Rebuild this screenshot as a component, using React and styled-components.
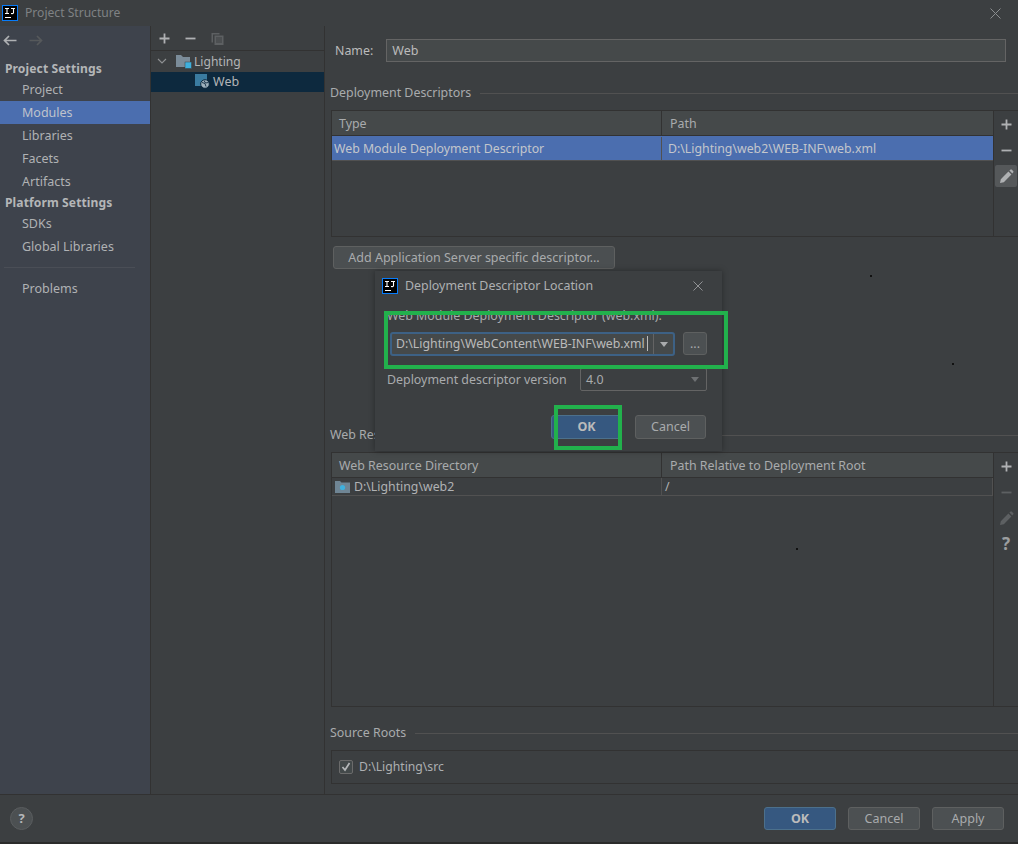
import React from 'react';
import styled, { createGlobalStyle } from 'styled-components';

const Global = createGlobalStyle`
  html, body { margin: 0; padding: 0; background: #3c3f41; }
  * { box-sizing: border-box; }
`;
const Frame = styled.div`
  position: relative; width: 1018px; height: 844px; overflow: hidden;
  display: flex; flex-direction: column; background: #3c3f41; color: #bbbbbb;
  font-family: "Noto Sans", "Open Sans", sans-serif; font-size: 13px; line-height: 18px;
`;
const TitleBar = styled.div`
  height: 26px; flex: none; display: flex; align-items: center; padding: 0 17px 0 2px; gap: 7px; color: #7f8284; font-size: 12.1px;
`;
const TitleText = styled.span`flex: 1;`;
const Body = styled.div`flex: 1; min-height: 0; display: flex;`;
const Sidebar = styled.nav`
  width: 151px; flex: none; background: #3e434c; border-right: 1px solid #323232; display: flex; flex-direction: column;
`;
const NavArrows = styled.div`height: 28px; display: flex; align-items: center; padding: 0 0 0 3px; gap: 12px; margin-bottom: 4px;`;
const GroupTitle = styled.div`height: ${p => p.$h || 20}px; line-height: ${p => p.$lh || 20}px; padding-left: 5px; font-weight: 700; font-size: 12.1px; color: #b4b6b8; letter-spacing: .1px;`;
const NavItem = styled.div`
  height: 23px; line-height: 23px; padding-left: 22px; font-size: 12.5px; color: ${p => p.$active ? '#bfc3cc' : '#b0b2b4'};
  background: ${p => p.$active ? '#4b6eaf' : 'transparent'};
`;
const NavSep = styled.div`height: 1px; background: #4a4e56; margin: 9px 15px 9px 4px;`;
const TreePane = styled.div`width: 174px; flex: none; border-right: 1px solid #323232; display: flex; flex-direction: column;`;
const TreeToolbar = styled.div`height: 25px; border-bottom: 1px solid #323232; display: flex; align-items: center; padding-left: 8px; gap: 15px; flex: none;`;
const TreeRow = styled.div`
  height: 20px; display: flex; align-items: center; padding: 0 0 1px ${p => p.$indent}px; gap: ${p => p.$gap || 3}px;
  background: ${p => p.$selected ? '#0d293e' : 'transparent'}; color: #b3b5b7; font-size: 12.5px; margin-top: ${p => p.$mt || 0}px;
`;
const TreeLabel = styled.span`margin-left: ${p => p.$ml || 0}px; font-size: ${p => p.$fs || 12.5}px;`;
const Content = styled.div`flex: 1; min-width: 0; padding: 13px 0 0 5px; display: flex; flex-direction: column;`;
const NameRow = styled.div`display: flex; align-items: center; padding-left: 5px; gap: 13px; height: 23px; padding-right: 12px; font-size: 12.4px;`;
const NameInput = styled.div`flex: 1; height: 23px; background: #45494a; border: 1px solid #646464; padding-left: 5px; line-height: 21px; color: #bbb; font-size: 12.5px;`;
const Section = styled.div`
  display: flex; align-items: center; gap: 9px; height: 18px; color: #a9abad; font-size: 12.4px; margin-top: ${p => p.$mt}px;
  &::after { content: ''; flex: 1; height: 1px; background: #515151; }
`;
const TableBox = styled.div`
  display: flex; height: ${p => p.$h}px; margin: 8px 0 0 1px; border: 1px solid #323232; border-right: 0;
`;
const TableMain = styled.div`flex: 1; min-width: 0; display: flex; flex-direction: column;`;
const Side = styled.div`width: 25px; flex: none; border-left: 1px solid #323232; display: flex; flex-direction: column; align-items: center; padding-top: 2px;`;
const SideBtn = styled.div`
  width: 22px; height: 22px; margin-bottom: 4px; display: flex; align-items: center; justify-content: center; border-radius: 2px;
  background: ${p => p.$on ? '#55585a' : 'transparent'};
`;
const HelpGlyph = styled.b`color: #9c9ea0; font-size: 17px; line-height: 22px;`;
const Cols = styled.div`display: grid; grid-template-columns: 329px 1fr;`;
const Head = styled(Cols)`height: 25px; background: #45494a; border-bottom: 1px solid #323232;`;
const HeadCell = styled.div`padding-left: 7px; line-height: 25px; font-size: 12.4px; color: #a9abad; & + & { border-left: 1px solid #323232; padding-left: 8px; }`;
const Row = styled(Cols)`
  height: ${p => p.$h}px; background: ${p => p.$selected ? '#4b6eaf' : 'transparent'}; color: ${p => p.$selected ? '#c3c6cc' : '#b0b2b4'};
  border-bottom: 1px solid #515151; padding-top: ${p => p.$selected ? 1 : 0}px; ${p => p.$framed ? 'border-right: 1px solid #515151;' : ''}
`;
const Cell = styled.div`padding-left: ${p => p.$pl || 2}px; display: flex; align-items: center; gap: ${p => p.$gap || 4}px; font-size: 12.3px; white-space: nowrap; & + & { border-left: 1px solid #515151; }`;
const Button = styled.div`
  width: ${p => p.$w}px; height: ${p => p.$h || 23}px; flex: none; border-radius: 3px; text-align: center; line-height: ${p => (p.$h || 23) - 2}px;
  border: 1px solid ${p => p.$primary ? '#4c708c' : '#5e6060'}; background: ${p => p.$primary ? '#365880' : '#4c5052'};
  color: ${p => p.$primary ? '#bbbbbb' : '#a9abad'}; font-weight: ${p => p.$primary ? 700 : 400}; font-size: 12.5px;
`;
const AddDescriptor = styled(Button)`margin: 9px 0 0 3px; background: #4b4f51;`;
const RootsBox = styled.div`margin: 8px 0 0 1px; height: 34px; border: 1px solid #323232; border-right: 0; display: flex; align-items: center; padding-left: 7px; gap: 6px; font-size: 12.2px; color: #adafb1;`;
const Check = styled.div`width: 14px; height: 14px; border: 1px solid #6b6b6b; background: #43494a; border-radius: 2px; display: flex; align-items: center; justify-content: center;`;
const Footer = styled.div`
  height: 50px; flex: none; border-top: 1px solid #323232; border-bottom: 2px solid #2b2b2b; display: flex; align-items: center; padding: 0 14px 0 10px; gap: 12px;
`;
const Help = styled.div`width: 23px; height: 23px; border-radius: 50%; background: #4c5052; border: 1px solid #5a5d5f; text-align: center; line-height: 20px; font-weight: 700; font-size: 13px; color: #b5b7b9; margin-right: auto;`;
const Dialog = styled.div`
  position: absolute; left: 375px; top: 271px; width: 347px; height: 180px; background: #3c3f41; box-shadow: 0 0 6px rgba(0,0,0,.35);
  display: flex; flex-direction: column; padding: 0 15px 0 12px;
`;
const DialogTitle = styled.div`height: 29px; flex: none; display: flex; align-items: center; gap: 7px; margin: 0 0 0 -5px; padding-right: 4px; color: #aeb0b2; font-size: 12.4px;`;
const FieldLabel = styled.div`margin-top: 7px; height: 18px; line-height: 18px; font-size: 12.4px; color: #a9abad; white-space: nowrap;`;
const FieldRow = styled.div`display: flex; gap: 8px; margin: 7px 0 0 3px; height: 24px;`;
const Combo = styled.div`
  flex: 1; border: 2px solid #3d6185; border-radius: 3px; background: #45494a; display: flex; align-items: center; justify-content: space-between;
  font-size: 12.3px; color: #bbb;
`;
const ComboText = styled.span`padding-left: 4px; white-space: nowrap;`;
const ComboArrowCell = styled.div`width: 20px; height: 100%; border-left: 1px solid #646464; display: flex; align-items: center; justify-content: center; flex: none;`;
const Caret = styled.span`display: inline-block; width: 1px; height: 15px; background: #bbb; margin-left: 2px; vertical-align: -3px;`;
const Arrow = styled.span`width: 0; height: 0; border-left: 4px solid transparent; border-right: 4px solid transparent; border-top: 5px solid ${p => p.$dim ? '#6e7173' : '#a9abad'};`;
const VersionRow = styled.div`display: flex; align-items: center; justify-content: space-between; margin-top: 12px; height: 23px; font-size: 12.4px; color: #a9abad;`;
const VersionSelect = styled.div`width: 127px; height: 23px; border: 1px solid #646464; border-radius: 2px; background: #3c3f41; display: flex; align-items: center; justify-content: space-between; padding: 0 7px 0 5px;`;
const DialogActions = styled.div`display: flex; margin-top: 24px; gap: 13px; justify-content: flex-end; padding-right: 1px; align-items: flex-start;`;
const Highlight = styled.div`position: absolute; border: 4px solid #22b14c; pointer-events: none; left: ${p => p.$x}px; top: ${p => p.$y}px; width: ${p => p.$w}px; height: ${p => p.$h}px;`;
const Speck = styled.i`position: absolute; width: 2px; height: 2px; background: #111; left: ${p => p.$x}px; top: ${p => p.$y}px;`;
const CloseBtn = styled.svg`flex: none;`;

const Logo = ({ s = 16 }) => (
  <svg width={s} height={s} viewBox="0 0 16 16" style={{ flex: 'none' }}>
    <rect x=".5" y=".5" width="15" height="15" fill="#000" stroke="#087cfa" />
    <path d="M3 3.500h4M5 3.500v5M3 8.500h4M9 3.500h4M11.500 3.500v4.300c0 .8-1 1-2.500.7M3 12.500h6" stroke="#fff" strokeWidth="1.100" fill="none" />
  </svg>
);
const X = ({ s = 11, c = '#8a8d8f' }) => (
  <CloseBtn width={s} height={s} viewBox="0 0 11 11"><path d="M.5.5l10 10M10.500.5l-10 10" stroke={c} strokeWidth="1" /></CloseBtn>
);
const Plus = ({ c = '#afb1b3' }) => <svg width="11" height="11" viewBox="0 0 11 11"><path d="M5.500.5v10M.5 5.500h10" stroke={c} strokeWidth="1.800" /></svg>;
const Minus = ({ c = '#afb1b3' }) => <svg width="11" height="11" viewBox="0 0 11 11"><path d="M.5 5.500h10" stroke={c} strokeWidth="1.800" /></svg>;
const Pencil = ({ c = '#afb1b3' }) => <svg width="15" height="15" viewBox="0 0 15 15"><path d="M1 14l.8-3.800 7.600-7.600 3 3-7.600 7.600zM10.400 1.600l1.200-1c.4-.3.8-.3 1.100 0l1.600 1.600c.3.3.3.7 0 1.100l-1 1.200z" fill={c} /></svg>;
const Copy = () => <svg width="13" height="13" viewBox="0 0 13 13"><path d="M.5 1h8v1.500h-6.500v8H.5z" fill="#5d6062"/><rect x="3.500" y="3.500" width="9" height="9.500" fill="#5d6062"/><path d="M5 6h6M5 8h6M5 10h6" stroke="#3c3f41"/></svg>;
const Back = () => <svg width="14" height="11" viewBox="0 0 14 11"><path d="M13.500 5.500H2M6 1L1.500 5.500 6 10" stroke="#afb1b3" strokeWidth="1.700" fill="none"/></svg>;
const Forward = () => <svg width="14" height="11" viewBox="0 0 14 11"><path d="M.5 5.500H12M8 1l4.500 4.500L8 10" stroke="#56595b" strokeWidth="1.700" fill="none"/></svg>;
const FolderModule = () => <svg width="16" height="15" viewBox="0 0 16 15"><path d="M0 1h5l2 2h7v10H0z" fill="#7b8c99"/><rect x="9" y="8" width="6.500" height="6.500" fill="#3fb0dd" stroke="#3c3f41" strokeWidth=".5"/></svg>;
const WebModule = () => <svg width="15" height="15" viewBox="0 0 15 15"><rect x="0" y="0" width="12" height="12" fill="#3a7ba0"/><circle cx="10" cy="10" r="4.300" fill="#9fb1bd" stroke="#0d293e"/><path d="M7 8.500l3 1 1 3M9 6.500l1.500 2.500 3-.5" stroke="#0d293e" strokeWidth=".9" fill="none"/></svg>;
const WebFolder = () => <svg width="15" height="12" viewBox="0 0 15 12"><path d="M0 0h5l1.500 1.500H15V12H0z" fill="#6f8594"/><circle cx="7.500" cy="6.500" r="2.600" fill="#3fb0dd"/></svg>;
const Chevron = () => <svg width="10" height="7" viewBox="0 0 10 7"><path d="M1 1l4 4 4-4" stroke="#8f9193" strokeWidth="1.100" fill="none"/></svg>;
const Tick = () => <svg width="10" height="10" viewBox="0 0 10 10"><path d="M1.500 5l2.500 3 4.500-7" stroke="#b5b7b9" strokeWidth="1.700" fill="none"/></svg>;

export default function App() {
  return (
    <Frame>
      <Global />
      <TitleBar>
        <Logo />
        <TitleText>Project Structure</TitleText>
        <X />
      </TitleBar>
      <Body>
        <Sidebar>
          <NavArrows><Back /><Forward /></NavArrows>
          <GroupTitle $lh={22}>Project Settings</GroupTitle>
          <NavItem>Project</NavItem>
          <NavItem $active>Modules</NavItem>
          <NavItem>Libraries</NavItem>
          <NavItem>Facets</NavItem>
          <NavItem>Artifacts</NavItem>
          <GroupTitle $h={19}>Platform Settings</GroupTitle>
          <NavItem>SDKs</NavItem>
          <NavItem>Global Libraries</NavItem>
          <NavSep />
          <NavItem>Problems</NavItem>
        </Sidebar>
        <TreePane>
          <TreeToolbar><Plus /><Minus /><Copy /></TreeToolbar>
          <TreeRow $indent={6} $gap={9} $mt={1}><Chevron /><FolderModule /><TreeLabel $ml={-7} $fs={12.1}>Lighting</TreeLabel></TreeRow>
          <TreeRow $indent={44} $selected><WebModule /><TreeLabel>Web</TreeLabel></TreeRow>
        </TreePane>
        <Content>
          <NameRow>Name:<NameInput>Web</NameInput></NameRow>
          <Section $mt={22}>Deployment Descriptors</Section>
          <TableBox $h={127}>
            <TableMain>
              <Head><HeadCell>Type</HeadCell><HeadCell>Path</HeadCell></Head>
              <Row $h={25} $selected>
                <Cell>Web Module Deployment Descriptor</Cell>
                <Cell $pl={6}>D:\Lighting\web2\WEB-INF\web.xml</Cell>
              </Row>
            </TableMain>
            <Side>
              <SideBtn><Plus /></SideBtn>
              <SideBtn><Minus /></SideBtn>
              <SideBtn $on><Pencil /></SideBtn>
            </Side>
          </TableBox>
          <AddDescriptor $w={282}>Add Application Server specific descriptor...</AddDescriptor>
          <Section $mt={157}>Web Resource Directories</Section>
          <TableBox $h={255}>
            <TableMain>
              <Head><HeadCell>Web Resource Directory</HeadCell><HeadCell>Path Relative to Deployment Root</HeadCell></Head>
              <Row $h={18} $framed>
                <Cell $pl={3} $gap={4}><WebFolder />D:\Lighting\web2</Cell>
                <Cell $pl={3}>/</Cell>
              </Row>
            </TableMain>
            <Side>
              <SideBtn><Plus /></SideBtn>
              <SideBtn><Minus c="#5d6062" /></SideBtn>
              <SideBtn><Pencil c="#5d6062" /></SideBtn>
              <SideBtn><HelpGlyph>?</HelpGlyph></SideBtn>
            </Side>
          </TableBox>
          <Section $mt={17}>Source Roots</Section>
          <RootsBox><Check><Tick /></Check>D:\Lighting\src</RootsBox>
        </Content>
      </Body>
      <Footer>
        <Help>?</Help>
        <Button $primary $w={72}>OK</Button>
        <Button $w={72}>Cancel</Button>
        <Button $w={72}>Apply</Button>
      </Footer>

      <Dialog>
        <DialogTitle><Logo /><TitleText>Deployment Descriptor Location</TitleText><X s={10} c="#9a9c9e" /></DialogTitle>
        <FieldLabel>Web Module Deployment Descriptor (web.xml):</FieldLabel>
        <FieldRow>
          <Combo>
            <ComboText>D:\Lighting\WebContent\WEB-INF\web.xml<Caret /></ComboText>
            <ComboArrowCell><Arrow /></ComboArrowCell>
          </Combo>
          <Button $w={24}>...</Button>
        </FieldRow>
        <VersionRow>Deployment descriptor version
          <VersionSelect>4.0<Arrow $dim /></VersionSelect>
        </VersionRow>
        <DialogActions>
          <Button $primary $w={71} $h={24}>OK</Button>
          <Button $w={71} $h={24}>Cancel</Button>
        </DialogActions>
      </Dialog>
      <Highlight $x={384} $y={311} $w={344} $h={58} />
      <Highlight $x={554} $y={405} $w={68} $h={45} />
      <Speck $x={870} $y={275} />
      <Speck $x={952} $y={363} />
      <Speck $x={796} $y={548} />
    </Frame>
  );
}
